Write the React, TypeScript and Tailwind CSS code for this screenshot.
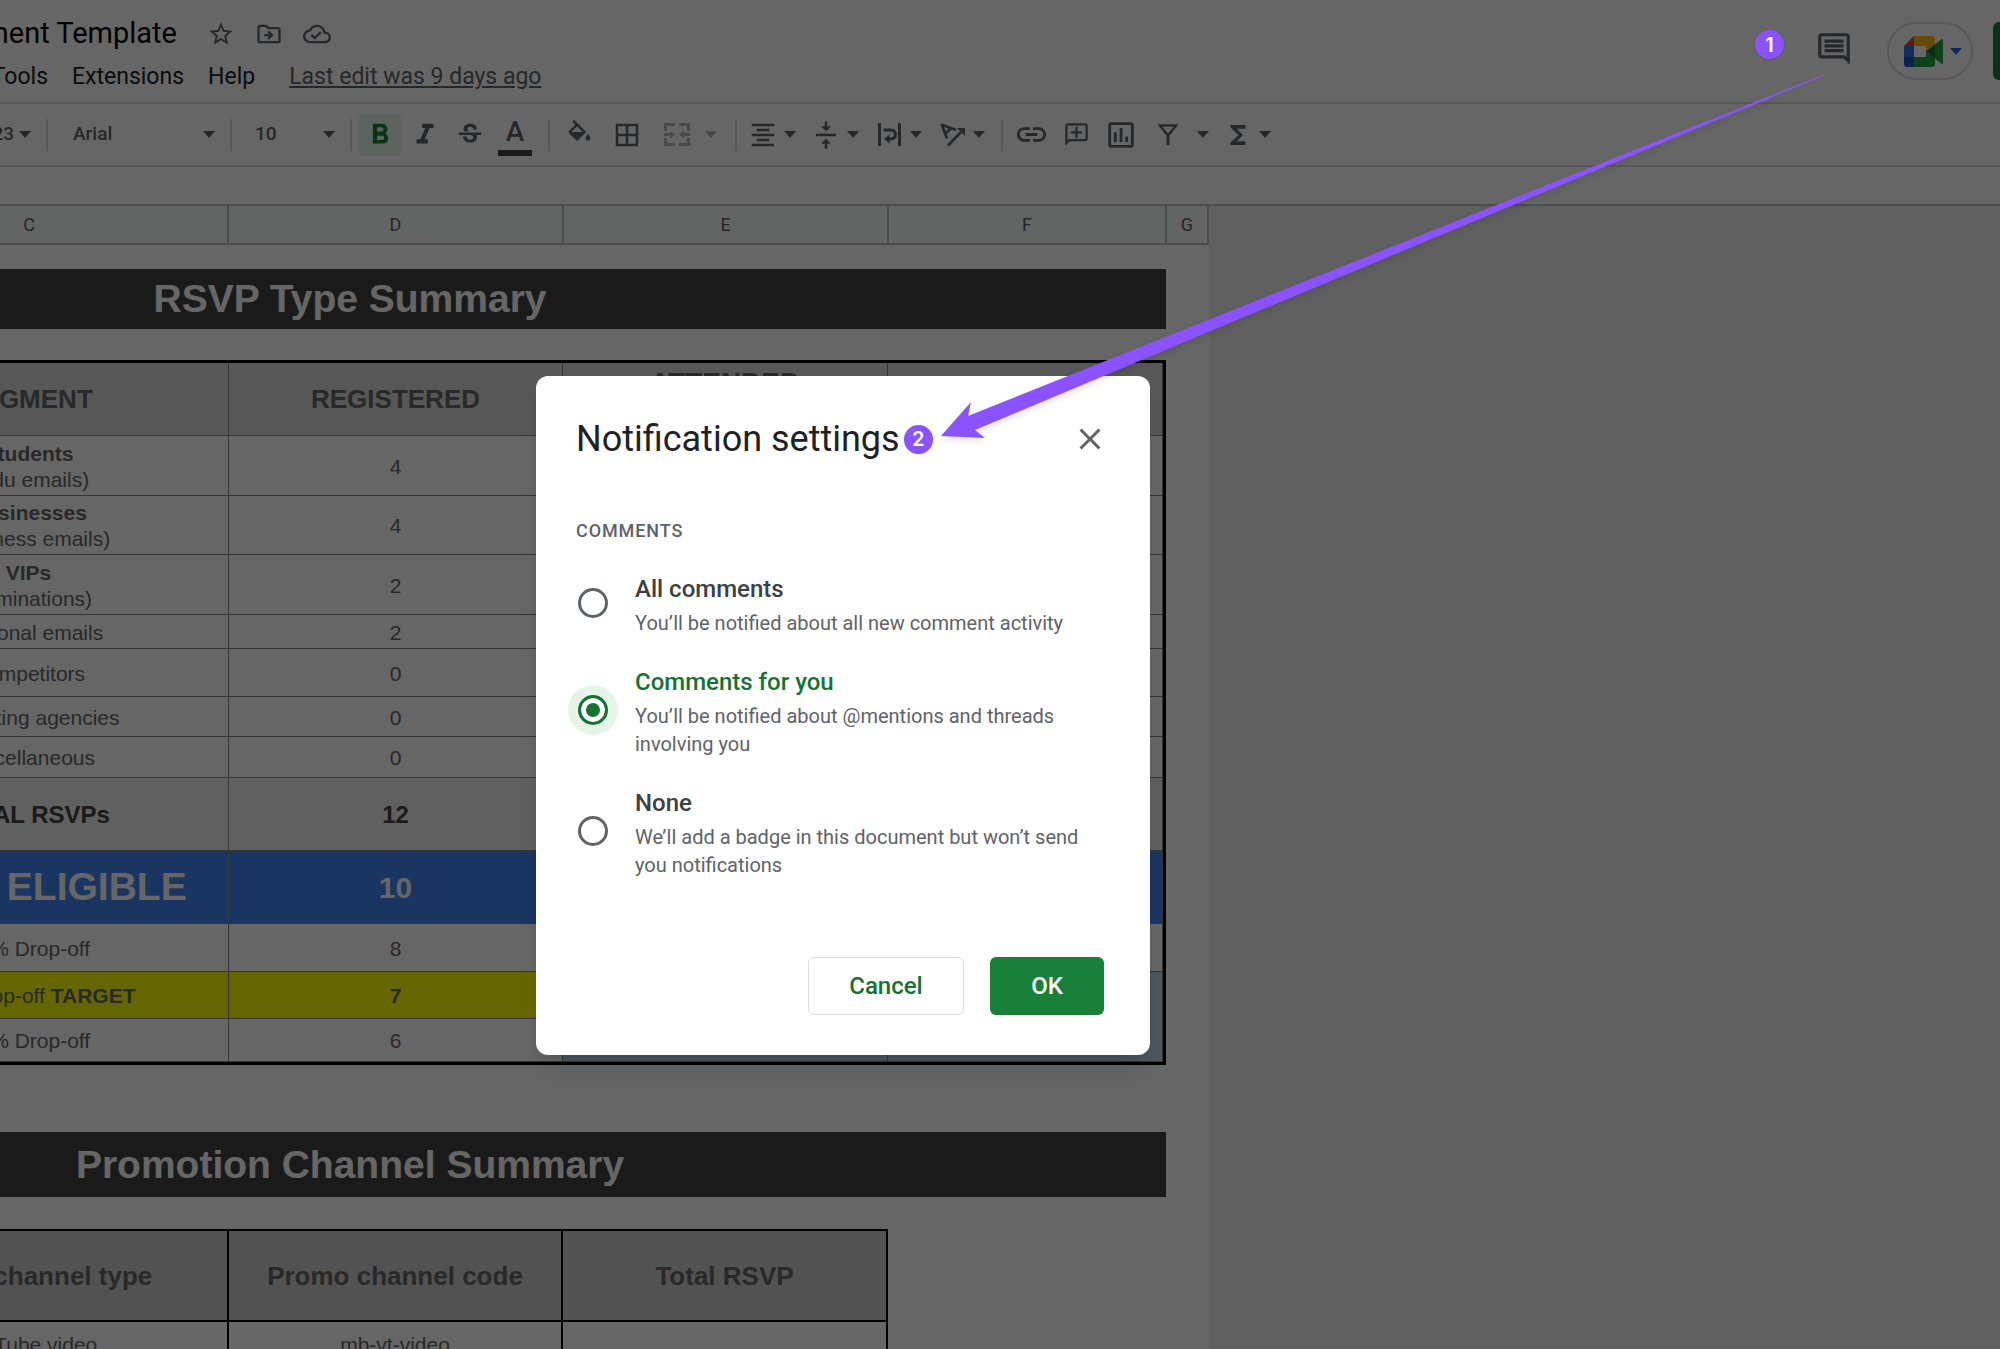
import { useState } from "react";
import type { ReactNode } from "react";
import {
  MdBorderAll,
  MdClose,
  MdFormatAlignCenter,
  MdFormatBold,
  MdFormatItalic,
  MdFunctions,
  MdInsertLink,
  MdOutlineAddComment,
  MdOutlineCloudDone,
  MdOutlineComment,
  MdOutlineDriveFileMove,
  MdOutlineInsertChart,
  MdStarBorder,
  MdStrikethroughS,
  MdVerticalAlignCenter,
} from "react-icons/md";

const Caret = ({ className = "text-[#5f6368]" }: { className?: string }) => (
  <svg viewBox="0 0 12 7" className={`h-[7px] w-3 shrink-0 ${className}`} fill="currentColor" aria-hidden="true">
    <path d="M0 0h12L6 7z" />
  </svg>
);

const Separator = () => <span className="h-8 w-[2px] shrink-0 bg-[#dadce0]" />;

interface ToolProps {
  label: string;
  children: ReactNode;
}

const Tool = ({ label, children }: ToolProps) => (
  <button aria-label={label} className="flex h-[42px] w-[42px] shrink-0 items-center justify-center">
    {children}
  </button>
);

const MenuTool = ({ label, children }: ToolProps) => (
  <button aria-label={label} className="flex h-[42px] w-[63px] shrink-0 items-center gap-[6px] pl-[11px]">
    <span className="flex w-[30px] justify-center">{children}</span>
    <Caret />
  </button>
);

const FillIcon = () => (
  <svg viewBox="0 0 24 24" className="size-[29px]" fill="currentColor">
    <path d="M16.560 8.940L7.620 0 6.210 1.410l2.380 2.380-5.150 5.150c-.590.590-.590 1.540 0 2.120l5.500 5.500c.290.290.680.440 1.060.440s.770-.150 1.060-.440l5.500-5.500c.590-.580.590-1.530 0-2.120zM5.210 10L10 5.210 14.790 10H5.210zM19 11.500s-2 2.170-2 3.500c0 1.100.900 2 2 2s2-.900 2-2c0-1.330-2-3.500-2-3.500z" />
  </svg>
);

const MergeIcon = () => (
  <svg viewBox="0 0 26 23" className="h-[23px] w-[26px]" fill="none" stroke="currentColor" strokeWidth="3">
    <path d="M1.5 8V1.5H11M15 1.5h9.5V8M1.5 15v6.5H11M15 21.5h9.5V15M0 11.5h7M26 11.5h-7" />
    <path d="M6 7.5l5 4-5 4zM20 7.5l-5 4 5 4z" fill="currentColor" stroke="none" />
  </svg>
);

const WrapIcon = () => (
  <svg viewBox="0 0 23 23" className="h-[23px] w-[23px]" fill="none" stroke="currentColor" strokeWidth="3">
    <path d="M1.5 0v23M21.5 0v23M5.5 7H13a4.5 4.5 0 0 1 0 9h-2" />
    <path d="M11.5 11.5v9L6 16z" fill="currentColor" stroke="none" />
  </svg>
);

const RotateIcon = () => (
  <svg viewBox="0 0 25 24" className="h-6 w-[25px]" fill="none" stroke="currentColor" strokeWidth="2.6">
    <path d="M16 7L1.800 1.800L7 15.500M5 11L11 5.500M8 22.500L21 9" strokeLinejoin="round" />
    <path d="M25 5v8l-8-8z" fill="currentColor" stroke="none" />
  </svg>
);

const FilterIcon = () => (
  <svg viewBox="0 0 20 21" className="h-[21px] w-5" fill="none" stroke="currentColor">
    <path d="M2 1.5h16L10 11.5z" strokeWidth="2.4" />
    <path d="M10 10v11" strokeWidth="3" />
  </svg>
);

const MeetLogo = () => (
  <svg viewBox="0 0 39 31" className="h-[31px] w-[39px]" aria-hidden="true">
    <path fill="#ea4335" d="M10 0v10H0z" />
    <path fill="#2a72e8" d="M0 10h10v11H0z" />
    <path fill="#1a56c4" d="M0 21h10v10H3a3 3 0 0 1-3-3z" />
    <path fill="#fbbc04" d="M10 0h18a3 3 0 0 1 3 3v8l-9 5v-6H10z" />
    <path fill="#1ea446" d="M10 21h12v-5l9 5v7a3 3 0 0 1-3 3H10z" />
    <path fill="#fff" d="M10 10h12v11H10z" />
    <path fill="#1ea446" d="M22 15.500L37.500 3.200Q39 2.300 39 4v23q0 1.700-1.500.8z" />
    <path fill="#137333" d="M22 15.500L31 8.400v14.200z" />
  </svg>
);

const Header = () => (
  <header className="h-[104px] shrink-0 border-b-2 border-[#dadce0] flex items-center justify-between">
    <div className="self-start pt-[15px] font-[Roboto,sans-serif]">
      <div className="flex h-[38px] items-center gap-[30px]">
        <h1 className="flex w-[177px] justify-end whitespace-nowrap text-[29px] text-black">Event Management Template</h1>
        <div className="flex items-center gap-5 text-[#5f6368]">
          <button aria-label="Star"><MdStarBorder className="size-7" /></button>
          <button aria-label="Move"><MdOutlineDriveFileMove className="size-7" /></button>
          <button aria-label="Document status"><MdOutlineCloudDone className="size-7" /></button>
        </div>
      </div>
      <nav className="flex h-12 items-center gap-6 text-[23px] text-[#202124]">
        <button className="flex w-12 justify-end">Tools</button>
        <button>Extensions</button>
        <button>Help</button>
        <a href="#history" className="ml-[10px] text-[#5f6368] underline">Last edit was 9 days ago</a>
      </nav>
    </div>
    <div className="flex items-center">
      <button aria-label="Open comment history" className="pb-1 text-[#5f6368]">
        <MdOutlineComment className="size-[38px]" />
      </button>
      <button aria-label="Join a call" className="ml-[34px] flex h-[58px] w-[86px] items-center gap-[7px] rounded-full border-2 border-[#dadce0] pl-[15px]">
        <MeetLogo />
        <Caret className="text-[#1967d2]" />
      </button>
      <button aria-label="Share" className="ml-5 h-[58px] w-[7px] rounded-l-md bg-[#188038]" />
    </div>
  </header>
);

const Toolbar = () => (
  <div className="flex h-[63px] shrink-0 items-center border-b-2 border-[#dadce0] font-[Roboto,sans-serif] text-[19px] font-medium text-[#5f6368]">
    <button className="flex w-[46px] items-center justify-end gap-[5px] pr-[15px]">
      <span className="flex w-[14px] justify-end">123</span>
      <Caret />
    </button>
    <Separator />
    <label className="flex w-[182px] items-center pl-[25px] pr-[15px]">
      <select aria-label="Font" className="min-w-0 flex-1 appearance-none">
        <option>Arial</option>
      </select>
      <Caret />
    </label>
    <Separator />
    <label className="flex w-[118px] items-center pl-[23px] pr-[15px]">
      <select aria-label="Font size" className="min-w-0 flex-1 appearance-none">
        <option>10</option>
      </select>
      <Caret />
    </label>
    <Separator />
    <div className="flex gap-[3px] pl-[7px] pr-3">
      <button aria-label="Bold" className="flex size-[42px] items-center justify-center rounded bg-[#e6f4ea] text-[#188038]">
        <MdFormatBold className="size-[34px]" />
      </button>
      <Tool label="Italic"><MdFormatItalic className="size-[34px]" /></Tool>
      <Tool label="Strikethrough"><MdStrikethroughS className="size-[30px]" /></Tool>
      <button aria-label="Text color" className="flex w-[42px] flex-col items-center">
        <span className="text-[28px] leading-[36px]">A</span>
        <span className="h-[6px] w-[34px] bg-[#434343]" />
      </button>
    </div>
    <Separator />
    <div className="flex items-center gap-[6px] pl-2 pr-[18px]">
      <Tool label="Fill color"><FillIcon /></Tool>
      <Tool label="Borders"><MdBorderAll className="size-[30px]" /></Tool>
      <button aria-label="Merge cells" className="flex h-[42px] items-center gap-[15px] pl-[10px] text-[#b7b9bb]">
        <MergeIcon />
        <Caret className="text-[#b7b9bb]" />
      </button>
    </div>
    <Separator />
    <div className="flex pr-3">
      <MenuTool label="Horizontal align"><MdFormatAlignCenter className="size-[30px]" /></MenuTool>
      <MenuTool label="Vertical align"><MdVerticalAlignCenter className="size-[34px]" /></MenuTool>
      <MenuTool label="Text wrapping"><WrapIcon /></MenuTool>
      <MenuTool label="Text rotation"><RotateIcon /></MenuTool>
    </div>
    <Separator />
    <div className="flex gap-[3px] pl-[7px]">
      <Tool label="Insert link"><MdInsertLink className="size-[35px]" /></Tool>
      <Tool label="Insert comment"><MdOutlineAddComment className="size-[27px] -scale-x-100" /></Tool>
      <Tool label="Insert chart"><MdOutlineInsertChart className="size-[34px]" /></Tool>
      <button aria-label="Filter" className="flex items-center gap-[19px] pl-[13px]">
        <FilterIcon />
        <Caret />
      </button>
      <MenuTool label="Functions"><MdFunctions className="size-[34px]" /></MenuTool>
    </div>
  </div>
);

interface RsvpRow {
  segment: ReactNode;
  registered: number;
  className: string;
  span?: boolean;
  skip?: boolean;
}

const rsvpRows: RsvpRow[] = [
  { segment: <><b>Students</b><br />(.edu emails)</>, registered: 4, className: "h-[60px]" },
  { segment: <><b>Businesses</b><br />(business emails)</>, registered: 4, className: "h-[59px]" },
  { segment: <><b>VIPs</b><br />(nominations)</>, registered: 2, className: "h-[60px]" },
  { segment: "Personal emails", registered: 2, className: "h-[34px]" },
  { segment: "Competitors", registered: 0, className: "h-[48px]" },
  { segment: "Marketing agencies", registered: 0, className: "h-[40px]" },
  { segment: "Miscellaneous", registered: 0, className: "h-[41px]" },
  { segment: "TOTAL RSVPs", registered: 12, className: "h-[73px] bg-[#efefef] text-2xl font-bold text-[#434343]" },
  { segment: <span className="text-[39px]">TOTAL ELIGIBLE</span>, registered: 10, className: "h-[73px] bg-[#4285f4] text-[30px] font-bold text-white" },
  { segment: "40% Drop-off", registered: 8, className: "h-[48px]" },
  { segment: <><span className="font-normal">30% Drop-off</span> TARGET</>, registered: 7, className: "h-[47px] bg-[#ffff00] font-bold", span: true },
  { segment: "20% Drop-off", registered: 6, className: "h-[43px]", skip: true },
];

const cell = "border-r border-b border-[#888888] p-0 text-center";
const bodyCell = "border-r border-b border-[#888888] pt-[2px] text-center";
const promoCell = "border-r-2 border-b-2 border-black p-0 text-center";

const columns = [
  { name: "B", className: "w-[297px]" },
  { name: "C", className: "w-[398px]" },
  { name: "D", className: "w-[335px]" },
  { name: "E", className: "w-[325px]" },
  { name: "F", className: "w-[278px]" },
  { name: "G", className: "w-[42px]" },
];

const Banner = ({ children }: { children: ReactNode }) => (
  <h2 className="w-[1632px] bg-[#434343] text-center text-[39px] font-bold text-white">{children}</h2>
);

const Sheet = () => (
  <main className="flex min-h-0 flex-1 overflow-hidden border-t-2 border-[#c0c0c0] bg-[#f1f1f1]">
    <div className="flex w-[1209px] shrink-0 flex-col overflow-hidden bg-white">
      <div className="-ml-[466px] w-[1675px] font-['Liberation_Sans',Arial,sans-serif]">
        <div className="flex border-b-2 border-[#c0c0c0] bg-[#f8f9fa] font-[Roboto,sans-serif] text-[18px] text-[#5f6368]">
          {columns.map((column) => (
            <div key={column.name} className={`h-[37px] shrink-0 border-r-2 border-[#c0c0c0] text-center leading-[37px] ${column.className}`}>
              {column.name}
            </div>
          ))}
        </div>

        <div className="pt-6 leading-[60px]"><Banner>RSVP Type Summary</Banner></div>
        <table className="mt-[31px] w-[1632px] table-fixed border-separate border-spacing-0 border-y-[3px] border-r-[3px] border-black text-[21px] leading-[26px] text-[#666666]">
          <thead>
            <tr className="h-[73px] bg-[#d9d9d9] text-[26px] leading-8">
              <th className={`${cell} w-[295px]`}></th>
              <th className={`${cell} w-[400px]`}>SEGMENT</th>
              <th className={`${cell} w-[334px]`}>REGISTERED</th>
              <th className={`${cell} w-[325px]`}><span className="text-[28px]">ATTENDED<br />&nbsp;</span></th>
              <th className={cell}></th>
            </tr>
          </thead>
          <tbody>
            {rsvpRows.map((row, idx) => (
              <tr key={idx} className={row.className}>
                <td className={bodyCell}></td>
                <td className={bodyCell}>{row.segment}</td>
                <td className={bodyCell}>{row.registered}</td>
                {!row.skip && (
                  <>
                    <td rowSpan={row.span ? 2 : 1} className={row.span ? `${bodyCell} bg-[#c5d9eb]` : bodyCell}></td>
                    <td rowSpan={row.span ? 2 : 1} className={row.span ? `${bodyCell} bg-[#c5d9eb]` : bodyCell}></td>
                  </>
                )}
              </tr>
            ))}
          </tbody>
        </table>

        <div className="pt-[67px] leading-[65px]"><Banner>Promotion Channel Summary</Banner></div>
        <table className="mt-8 w-[1354px] table-fixed border-separate border-spacing-0 border-t-2 border-black text-[21px] leading-[26px] text-[#666666]">
          <thead>
            <tr className="h-[91px] bg-[#cccccc] text-[26px]">
              <th className={`${promoCell} w-[295px]`}></th>
              <th className={`${promoCell} w-[400px]`}>Promo channel type</th>
              <th className={`${promoCell} w-[334px]`}>Promo channel code</th>
              <th className={promoCell}>Total RSVP</th>
            </tr>
          </thead>
          <tbody>
            <tr className="h-[48px]">
              <td className={promoCell}></td>
              <td className={promoCell}>YouTube video</td>
              <td className={promoCell}>mb-yt-video</td>
              <td className={promoCell}></td>
            </tr>
          </tbody>
        </table>
      </div>
    </div>
  </main>
);

const Badge = ({ children }: { children: ReactNode }) => (
  <span className="flex size-[29px] shrink-0 items-center justify-center rounded-full bg-[#8b53ff] font-[Inter,sans-serif] text-[20px] font-semibold text-white shadow-sm">
    {children}
  </span>
);

const options = [
  { id: "all", title: "All comments", text: "You’ll be notified about all new comment activity" },
  { id: "you", title: "Comments for you", text: "You’ll be notified about @mentions and threads involving you" },
  { id: "none", title: "None", text: "We’ll add a badge in this document but won’t send you notifications" },
];

const NotificationDialog = () => {
  const [selected, setSelected] = useState("you");

  return (
    <div
      role="dialog"
      aria-labelledby="dialog-title"
      className="absolute left-[536px] top-[376px] w-[614px] rounded-xl bg-white pb-10 pl-10 pr-[46px] pt-[39px] font-[Roboto,sans-serif] text-[#5f6368] shadow-xl"
    >
      <div className="flex h-12 items-center gap-1">
        <h2 id="dialog-title" className="text-[36px] text-[#202124]">Notification settings</h2>
        <Badge>2</Badge>
        <button aria-label="Close" className="-mr-1 ml-auto"><MdClose className="size-9" /></button>
      </div>
      <fieldset className="mt-14">
        <legend className="text-[18px] font-medium uppercase leading-6 tracking-wider">Comments</legend>
        <div className="mt-[26px] flex flex-col gap-[25px]">
          {options.map((option) => (
            <label key={option.id} className="flex items-center gap-[27px] pl-[2px]">
              <input
                type="radio"
                name="comments"
                checked={selected === option.id}
                onChange={() => setSelected(option.id)}
                className="size-[30px] shrink-0 appearance-none rounded-full border-3 border-[#5f6368] checked:border-[#137333] checked:bg-[#137333] checked:shadow-[inset_0_0_0_5px_#ffffff,0_0_0_10px_#e6f4ea]"
              />
              <span className="text-[20px] leading-7">
                <span className={`block text-2xl font-medium leading-10 ${selected === option.id ? "text-[#137333]" : "text-[#3c4043]"}`}>
                  {option.title}
                </span>
                {option.text}
              </span>
            </label>
          ))}
        </div>
      </fieldset>
      <div className="mt-[78px] flex justify-end gap-[26px] text-2xl font-medium">
        <button className="h-[58px] w-[156px] rounded-md border border-[#dadce0] text-[#137333]">Cancel</button>
        <button className="h-[58px] w-[114px] rounded-md bg-[#188038] text-white">OK</button>
      </div>
    </div>
  );
};

export default function App() {
  return (
    <div className="relative flex h-screen flex-col overflow-hidden bg-white">
      <Header />
      <Toolbar />
      <div className="h-[37px] shrink-0" />
      <Sheet />

      <div className="absolute inset-0 bg-black/60" />
      <NotificationDialog />
      <div className="absolute right-[216px] top-[30px]"><Badge>1</Badge></div>
      <svg viewBox="0 0 890 370" className="absolute left-[940px] top-[72px] h-[370px] w-[890px] drop-shadow-md" aria-hidden="true">
        <path fill="#8b53ff" d="M1 364L31 330L28 344L243 258L884 2.500V3.500L273 258L35 358L45 366z" />
      </svg>
    </div>
  );
}
